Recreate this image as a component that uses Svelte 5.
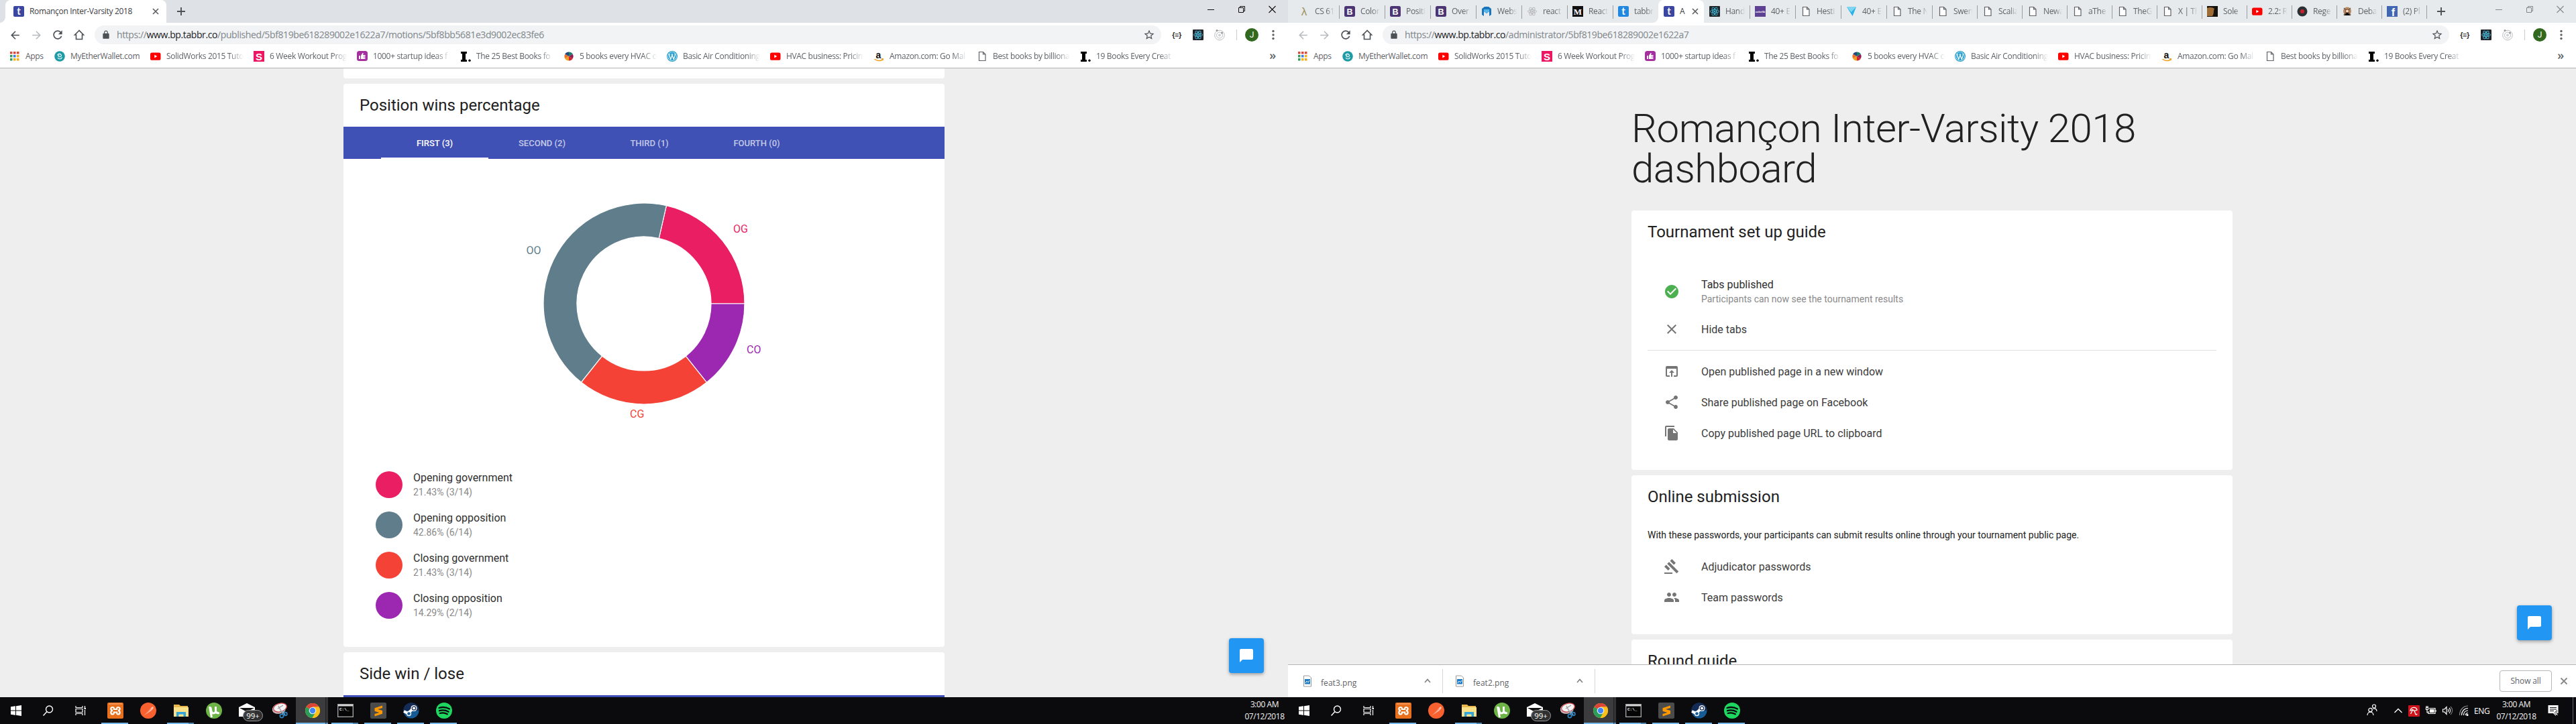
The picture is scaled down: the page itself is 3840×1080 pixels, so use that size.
<script>
  const bookmarks = [
    ['youtube', 'SolidWorks 2015 Tuto'],
    ['skimm', '6 Week Workout Prog'],
    ['thumb', '1000+ startup ideas f'],
    ['inc', 'The 25 Best Books fo'],
    ['wheel', '5 books every HVAC o'],
    ['wordpress', 'Basic Air Conditioning'],
    ['youtube', 'HVAC business: Pricin'],
    ['amazon', 'Amazon.com: Go Mal'],
    ['doc', 'Best books by billiona'],
    ['inc', '19 Books Every Creat']
  ];

  const tabs = [
    ['lambda', 'CS 61'], ['bootstrap', 'Color'], ['bootstrap', 'Positi'], ['bootstrap', 'Over'],
    ['webs', 'Webs'], ['atomgrey', 'react'], ['medium', 'React'], ['tlight', 'tabbr'],
    ['tdark', 'A'], ['atom', 'Hand'], ['colorlib', '40+ E'], ['doc', 'Hesti'], ['arrow', '40+ E'],
    ['doc', 'The N'], ['doc', 'Swen'], ['doc', 'Scalia'], ['doc', 'Newa'], ['doc', 'aThe'],
    ['doc', 'TheG'], ['doc', 'X | Th'], ['sole', 'Sole'], ['youtube', '2.2: R'], ['rege', 'Rege'],
    ['deba', 'Deba'], ['facebook', '(2) Pl']
  ];

  const apps = [
    ['xampp', 'open'], ['postman', ''], ['folder', 'multi'], ['utorrent', ''], ['mail', ''], ['snip', ''],
    ['chrome', 'active'], ['cmd', 'multi'], ['sublime', 'open'], ['steam', 'open'], ['spotify', 'open']
  ];

  const positions = [
    { name: 'Opening government', short: 'OG', wins: 3, color: '#e91e63', lx: 581, ly: 110 },
    { name: 'Opening opposition', short: 'OO', wins: 6, color: '#607d8b', lx: 272.5, ly: 142 },
    { name: 'Closing government', short: 'CG', wins: 3, color: '#f44336', lx: 427, ly: 386 },
    { name: 'Closing opposition', short: 'CO', wins: 2, color: '#9c27b0', lx: 601, ly: 290 }
  ];
  const total = 14;
  const cx = 448, cy = 216, outer = 150, inner = 100;

  // Slices run counter-clockwise, starting at three o'clock.
  function arc(from, to) {
    const p = (r, a) => `${(cx + r * Math.cos(a)).toFixed(2)} ${(cy - r * Math.sin(a)).toFixed(2)}`;
    const big = to - from > Math.PI ? 1 : 0;
    return `M${p(outer, from)}A${outer} ${outer} 0 ${big} 0 ${p(outer, to)}L${p(inner, to)}A${inner} ${inner} 0 ${big} 1 ${p(inner, from)}Z`;
  }
  let angle = 0;
  const slices = positions.map((p) => {
    const from = angle;
    angle += (p.wins / total) * Math.PI * 2;
    return { ...p, d: arc(from, angle), share: ((p.wins / total) * 100).toFixed(2) };
  });

  const material = {
    check: 'M12 2C6.48 2 2 6.48 2 12s4.48 10 10 10 10-4.48 10-10S17.52 2 12 2zm-2 15l-5-5 1.41-1.41L10 14.17l7.59-7.59L19 8l-9 9z',
    close: 'M19 6.41L17.59 5 12 10.59 6.41 5 5 6.41 10.59 12 5 17.59 6.41 19 12 13.41 17.59 19 19 17.59 13.41 12z',
    open: 'M19 4H5c-1.11 0-2 .9-2 2v12c0 1.1.89 2 2 2h4v-2H5V8h14v10h-4v2h4c1.1 0 2-.9 2-2V6c0-1.1-.89-2-2-2zm-7 6l-4 4h3v6h2v-6h3l-4-4z',
    share: 'M18 16.08c-.76 0-1.44.3-1.96.77L8.91 12.7c.05-.23.09-.46.09-.7s-.04-.47-.09-.7l7.05-4.11c.54.5 1.25.81 2.04.81 1.66 0 3-1.34 3-3s-1.34-3-3-3-3 1.34-3 3c0 .24.04.47.09.7L8.04 9.81C7.5 9.31 6.79 9 6 9c-1.66 0-3 1.34-3 3s1.34 3 3 3c.79 0 1.5-.31 2.04-.81l7.12 4.16c-.05.21-.08.43-.08.65 0 1.61 1.31 2.92 2.92 2.92s2.92-1.31 2.92-2.92-1.31-2.92-2.92-2.92z',
    copy: 'M16 1H4c-1.1 0-2 .9-2 2v14h2V3h12V1zm-1 4l6 6v10c0 1.1-.9 2-2 2H7.99C6.89 23 6 22.1 6 21l.01-14c0-1.1.89-2 1.99-2h7zm-1 7h5.5L14 6.5V12z',
    gavel: 'M1 21h12v2H1zM5.245 8.07l2.83-2.827 14.14 14.142-2.828 2.828zM12.317 1l5.657 5.656-2.83 2.83-5.654-5.66zM3.825 9.485l5.657 5.657-2.828 2.828-5.657-5.657z',
    people: 'M16 11c1.66 0 2.99-1.34 2.99-3S17.66 5 16 5s-3 1.34-3 3 1.34 3 3 3zm-8 0c1.66 0 2.99-1.34 2.99-3S9.66 5 8 5 5 6.34 5 8s1.34 3 3 3zm0 2c-2.33 0-7 1.17-7 3.5V19h14v-2.5c0-2.33-4.67-3.5-7-3.5zm8 0c-.29 0-.62.02-.97.05 1.16.84 1.97 1.97 1.97 3.45V19h6v-2.5c0-2.33-4.67-3.5-7-3.5z',
    chat: 'M20 2H4c-1.1 0-2 .9-2 2v18l4-4h14c1.1 0 2-.9 2-2V4c0-1.1-.9-2-2-2z',
    back: 'M20 11H7.83l5.59-5.59L12 4l-8 8 8 8 1.41-1.41L7.83 13H20v-2z',
    forward: 'M12 4l-1.41 1.41L16.17 11H4v2h12.17l-5.58 5.59L12 20l8-8z',
    reload: 'M17.65 6.35C16.2 4.9 14.21 4 12 4c-4.42 0-7.99 3.58-7.99 8s3.57 8 7.99 8c3.73 0 6.84-2.55 7.73-6h-2.08c-.82 2.33-3.04 4-5.65 4-3.31 0-6-2.69-6-6s2.69-6 6-6c1.66 0 3.14.69 4.22 1.78L13 11h7V4l-2.35 2.35z',
    lock: 'M18 8h-1V6c0-2.76-2.24-5-5-5S7 3.24 7 6v2H6c-1.1 0-2 .9-2 2v10c0 1.1.9 2 2 2h12c1.1 0 2-.9 2-2V10c0-1.1-.9-2-2-2zm-2.9 0H8.9V6c0-1.71 1.39-3.1 3.1-3.1s3.1 1.39 3.1 3.1v2z',
    star: 'M22 9.24l-7.19-.62L12 2 9.19 8.63 2 9.24l5.46 4.73L5.82 21 12 17.27 18.18 21l-1.63-7.03L22 9.24zM12 15.4l-3.76 2.27 1-4.28-3.32-2.88 4.38-.38L12 6.1l1.71 4.04 4.38.38-3.32 2.88 1 4.28L12 15.4z'
  };
</script>

{#snippet mat(name, size)}
  <svg width={size} height={size} viewBox="0 0 24 24" fill="currentColor"><path d={material[name]} /></svg>
{/snippet}

{#snippet atom(color, bg)}
  {#if bg}<rect width="16" height="16" rx="1" fill={bg} />{/if}
  <g fill="none" stroke={color} stroke-width="0.9">
    <ellipse cx="8" cy="8" rx="6.5" ry="2.5" />
    <ellipse cx="8" cy="8" rx="6.5" ry="2.5" transform="rotate(60 8 8)" />
    <ellipse cx="8" cy="8" rx="6.5" ry="2.5" transform="rotate(120 8 8)" />
  </g>
  <circle cx="8" cy="8" r="1.3" fill={color} />
{/snippet}

{#snippet fav(name)}
  <svg class="fav" width="16" height="16" viewBox="0 0 16 16">
    {#if name === 'tdark' || name === 'tlight'}
      <rect width="16" height="16" rx="2" fill={name === 'tdark' ? '#3a46a0' : '#2088e0'} />
      <text x="8" y="13" text-anchor="middle" class="letter t">t</text>
    {:else if name === 'bootstrap'}
      <rect width="16" height="16" rx="2.5" fill="#4b3573" />
      <text x="8" y="12.5" text-anchor="middle" class="letter b">B</text>
    {:else if name === 'medium'}
      <rect width="16" height="16" fill="#111" />
      <text x="8" y="12.5" text-anchor="middle" class="letter m">M</text>
    {:else if name === 'facebook'}
      <rect width="16" height="16" fill="#4267b2" />
      <text x="9.5" y="15" text-anchor="middle" class="letter f">f</text>
    {:else if name === 'lambda'}
      <text x="8" y="14" text-anchor="middle" class="letter lam">λ</text>
    {:else if name === 'skimm'}
      <rect width="16" height="16" fill="#ec1763" />
      <text x="8" y="13.5" text-anchor="middle" class="letter s">S</text>
    {:else if name === 'inc'}
      <path d="M1 1h9v3H8v9h2v3H1v-3h2V4H1z" fill="#000" />
      <circle cx="14" cy="14.3" r="1.7" fill="#000" />
    {:else if name === 'youtube'}
      <rect y="2.4" width="15.5" height="11.4" rx="2.6" fill="#f00" />
      <path d="M6.3 5.7v4.8L10.3 8.1z" fill="#fff" />
    {:else if name === 'thumb'}
      <rect y="0" width="16" height="15" rx="3.5" fill="#a62fa0" />
      <path d="M3 7h2v5H3zM6 7l2.500-4c1 0 1.300.7 1 1.500L9 6h3.500v6H6z" fill="#fff" />
      <path d="M9.500 8h3.500M9.500 10h3.500" stroke="#a62fa0" stroke-width=".6" />
    {:else if name === 'wheel'}
      <circle cx="8" cy="8" r="6.6" fill="#eee" />
      <path d="M8 8V1.400A6.600 6.600 0 0 1 13.700 4.700z" fill="#1c7f6e" />
      <path d="M8 8l5.700-3.300a6.600 6.600 0 0 1 0 6.600z" fill="#8c1d5a" />
      <path d="M8 8l5.700 3.300A6.600 6.600 0 0 1 8 14.600z" fill="#d5232f" />
      <path d="M8 8v6.600a6.600 6.600 0 0 1-5.700-3.300z" fill="#f0a21c" />
      <path d="M8 8l-5.700 3.300a6.600 6.600 0 0 1 0-6.600z" fill="#ea7524" />
      <path d="M8 8L2.300 4.700A6.600 6.600 0 0 1 8 1.400z" fill="#23477f" />
    {:else if name === 'wordpress'}
      <circle cx="8" cy="8" r="7.400" fill="#fff" stroke="#27a0cf" stroke-width="1.200" />
      <circle cx="8" cy="8" r="6.200" fill="#27a0cf" />
      <path d="M3 5l2.800 7.500L8 6l2.300 6.500L12.800 5M2.500 5H5M6.600 5h2.600M11 4.500h1.500" stroke="#fff" stroke-width="1.200" fill="none" />
    {:else if name === 'amazon'}
      <text x="7.500" y="10.500" text-anchor="middle" class="letter amz">a</text>
      <path d="M1.500 12c4 3.300 9 3.300 12 .8M12 11.800l2.300.2-.6 2.200" stroke="#f79a1c" stroke-width="1.500" fill="none" />
    {:else if name === 'doc'}
      <path d="M3.500 1.500h6l3.500 3.500v9.500H3.500zM9.500 1.500V5H13" fill="#fff" stroke="#5f6368" stroke-width="1.200" />
    {:else if name === 'mew'}
      <circle cx="8" cy="8" r="7.800" fill="#1d9aa5" />
      <path d="M4.500 6.500c1-3 5-3 6 0 .4 2-2 2.500-3.500 2-1.500-.4-1-2.500.5-2.300M11.500 9.500c-1 3-5 3.300-6.500.5" stroke="#d9f3f3" stroke-width="1.300" fill="none" />
    {:else if name === 'webs'}
      <path d="M1 4l4-3h6l4 3v9l-3 2V8L8 11 4 8v7l-3-2z" fill="#1b75bb" />
      <path d="M4 5h8v3l-4 3-4-3z" fill="#56b5e8" />
    {:else if name === 'atomgrey'}
      {@render atom('#b4b6ba', '')}
    {:else if name === 'atom'}
      {@render atom('#3fb7cf', '#20232a')}
    {:else if name === 'colorlib'}
      <rect width="16" height="16" fill="#5d4293" />
      <text x="8" y="10" text-anchor="middle" class="letter cl">colorlib</text>
    {:else if name === 'arrow'}
      <path d="M1 1.500h14L9.500 15z" fill="#2ab4e6" />
      <path d="M1 1.500h14L7.500 9z" fill="#7fd6f2" />
    {:else if name === 'sole'}
      <rect width="16" height="16" fill="#17110d" />
      <path d="M0 3c4-2 9-1 11 1-2 3 0 7-3 11H0z" fill="#a06c36" />
    {:else if name === 'rege'}
      <circle cx="8" cy="8" r="7.500" fill="#2c3136" />
      <circle cx="8" cy="8" r="3" fill="#c8202c" />
    {:else if name === 'deba'}
      <circle cx="8" cy="7.500" r="6" fill="#b58a63" />
      <path d="M3 14L8 8l5 6M3 3l10 10M13 3L3 13" stroke="#6a5a4a" stroke-width="1.300" />
      <circle cx="8" cy="7.500" r="2.500" fill="#f0e2c8" stroke="#8b3d2e" />
    {/if}
  </svg>
{/snippet}

{#snippet app(name)}
  <svg class="appicon" width="28" height="28" viewBox="-2 -2 28 28">
    {#if name === 'xampp'}
      <rect width="24" height="24" rx="2" fill="#e8701d" />
      <path d="M2 2h20" stroke="#f6b58a" stroke-width="1" />
      <path d="M8 7c-3.500 0-3.500 4.500 0 5-3.500.5-3.500 5.500 0 5.500 2.200 0 1.800-2 1.800-3h4.400c0 1-.4 3 1.800 3 3.500 0 3.500-5 0-5.500 3.500-.5 3.500-5 0-5-2.200 0-1.800 2-1.800 3H9.800c0-1 .4-3-1.800-3z" fill="none" stroke="#fff" stroke-width="2.200" />
    {:else if name === 'postman'}
      <circle cx="12" cy="12" r="12" fill="#f9602f" />
      <path d="M5 19.500L13.500 11l3.500-4 2.500-1 .3 2.500-3.800 4z" fill="#fbc5b0" />
      <path d="M5 19.500L16.500 9" stroke="#f9602f" stroke-width=".8" />
    {:else if name === 'folder'}
      <path d="M1 3h8l2 2h11v16H1z" fill="#e8b84c" />
      <path d="M1 7h22v14H1z" fill="#fbe08a" />
      <path d="M5 21v-7h14v7h-3.500v-3.500h-7V21z" fill="#2fa5dc" />
    {:else if name === 'utorrent'}
      <circle cx="12" cy="12" r="12" fill="#6db345" />
      <path d="M5.500 6l3 16M6.800 7l1.300 6.500c1 3.500 6 3 6.500-.5L14.500 6M14.800 13c.5 2.500 2.500 3 5 2.500" fill="none" stroke="#fff" stroke-width="3" />
    {:else if name === 'mail'}
      <path d="M0 7l12-6 12 6v14H0z" fill="#fff" />
      <path d="M1 8h22l-11 6z" fill="#111" />
    {:else if name === 'snip'}
      <ellipse cx="11" cy="9" rx="10.500" ry="7.500" transform="rotate(-18 11 9)" fill="#c9b6bb" />
      <ellipse cx="12.500" cy="7.500" rx="10" ry="6.200" transform="rotate(-15 12.500 7.500)" fill="#f4f4f5" stroke="#cf4a4f" stroke-width="1.300" />
      <path d="M9 9l8-5M10 5l5 10" stroke="#999" stroke-width="1.200" />
      <path d="M13 11l7 7M20 11l-5 7" stroke="#9bb6c6" stroke-width="1.500" />
      <circle cx="15" cy="20" r="2.600" fill="none" stroke="#2d82bd" stroke-width="1.700" />
      <circle cx="20.500" cy="17" r="2.400" fill="none" stroke="#2d82bd" stroke-width="1.700" />
    {:else if name === 'chrome'}
      <circle cx="12" cy="12" r="11" fill="#fbc116" />
      <path d="M12 12L2.500 6.500A11 11 0 0 1 21.500 6.500H12z" fill="#dc4437" />
      <path d="M12 12L2.500 6.500A11 11 0 0 0 11.500 23L16.500 14.500z" fill="#2a9d58" />
      <path d="M12 6.500h9.500A11 11 0 0 1 11.500 23l5-8.500z" fill="#fbc116" />
      <circle cx="12" cy="12" r="5.300" fill="#f3f3f3" />
      <circle cx="12" cy="12" r="4.200" fill="#4285f4" />
    {:else if name === 'cmd'}
      <rect x=".7" y="2.700" width="22.600" height="18.600" fill="#050505" stroke="#a8a8a8" stroke-width="1.300" />
      <rect x="1" y="3" width="22" height="2.500" fill="#d5d5d5" />
      <text x="3" y="11.500" class="letter cmdt">C:\_</text>
    {:else if name === 'sublime'}
      <rect width="24" height="24" rx="2" fill="#4b4b4b" />
      <path d="M18 4.500L6.500 8.200v4.600l7 2.200-7 2v3.500L18 16.700v-4.600l-7-2.200 7-1.900z" fill="#ff9800" />
    {:else if name === 'steam'}
      <circle cx="12" cy="12" r="11.500" fill="#175b96" />
      <path d="M.5 12A11.500 11.500 0 0 1 23.500 12z" fill="#142b55" />
      <path d="M1 13l6 3 9-8" stroke="#fff" stroke-width="4" fill="none" />
      <circle cx="16" cy="8.500" r="4.600" fill="#fff" />
      <circle cx="16" cy="8.500" r="2.700" fill="#fff" stroke="#142b55" stroke-width="1.200" />
      <circle cx="8.500" cy="16.500" r="3" fill="#175b96" stroke="#fff" stroke-width="1.300" />
    {:else if name === 'spotify'}
      <circle cx="12" cy="12" r="12" fill="#1ed760" />
      <path d="M4.500 8c5.500-1.700 11-1 15.500 1.500M5 12.200c4.500-1.300 9.500-.8 13.500 1.500M5.800 16c4-1 7.500-.7 11 1.300" fill="none" stroke="#0b0b0d" stroke-width="2.300" stroke-linecap="round" />
    {/if}
  </svg>
{/snippet}

{#snippet controls()}
  <div class="controls">
    <svg width="46" height="28" viewBox="0 0 46 28"><path d="M18 14.500h10" stroke="currentColor" /></svg>
    <svg width="46" height="28" viewBox="0 0 46 28"><path d="M18.500 11.500h7v7h-7zM20.500 11.500v-2h7v7h-2" fill="none" stroke="currentColor" /></svg>
    <svg width="46" height="28" viewBox="0 0 46 28"><path d="M17.500 9l10 10M27.500 9l-10 10" stroke="currentColor" stroke-width="1.100" /></svg>
  </div>
{/snippet}

{#snippet plus()}
  <svg class="plus" width="28" height="28" viewBox="0 0 28 28"><path d="M14 8v12M8 14h12" stroke="#4d5156" stroke-width="1.900" /></svg>
{/snippet}

{#snippet tabclose()}
  <svg width="16" height="16" viewBox="0 0 16 16"><path d="M4 4l8 8M12 4l-8 8" stroke="#5a5e63" stroke-width="1.600" /></svg>
{/snippet}

{#snippet toolbar(path, canGoBack)}
  <div class="toolbar">
    <span class="nav" class:dim={!canGoBack}>{@render mat('back', 19)}</span>
    <span class="nav dim">{@render mat('forward', 19)}</span>
    <span class="nav">{@render mat('reload', 20)}</span>
    <span class="nav"><svg width="20" height="20" viewBox="0 0 20 20"><path d="M10 3.500L3.500 10H5.500v6.500h9V10h2z" fill="none" stroke="currentColor" stroke-width="1.600" /></svg></span>
    <div class="omnibox">
      {@render mat('lock', 14)}
      <span class="url"><i>https://</i>www.bp.tabbr.co<i>{path}</i></span>
      {@render mat('star', 18)}
    </div>
    <span class="ext braces">{'{≡}'}</span>
    <span class="ext"><svg width="16" height="16" viewBox="0 0 16 16">{@render atom('#4fc3e0', '#20232a')}</svg></span>
    <span class="ext"><svg width="18" height="18" viewBox="0 0 18 18"><g fill="none" stroke="#bcbec2"><circle cx="9" cy="9.500" r="7.300" /><circle cx="9" cy="9.500" r="4.500" /></g><circle cx="9" cy="9.500" r="2" fill="#cfd1d4" /><circle cx="5" cy="2.500" r="1.500" fill="#97999d" /><circle cx="12.500" cy="6" r="1.500" fill="#97999d" /></svg></span>
    <span class="divider"></span>
    <span class="avatar">J</span>
    <svg class="dots" width="20" height="20" viewBox="0 0 20 20" fill="#5f6368"><circle cx="10" cy="4.500" r="1.700" /><circle cx="10" cy="10" r="1.700" /><circle cx="10" cy="15.500" r="1.700" /></svg>
  </div>
  <div class="bookmarks">
    <svg class="grid" width="14" height="14" viewBox="0 0 14 14">
      {#each ['#dd4b3e', '#dd4b3e', '#dd4b3e', '#2f9e58', '#3c7de0', '#f2b01e', '#2f9e58', '#f2b01e', '#f2b01e'] as c, i}
        <rect x={(i % 3) * 5} y={Math.floor(i / 3) * 5} width="3.500" height="3.500" fill={c} />
      {/each}
    </svg>
    <span class="apps">Apps</span>
    <span class="mew">{@render fav('mew')}MyEtherWallet.com</span>
    {#each bookmarks as [icon, label]}
      <span class="mark">{@render fav(icon)}<span class="fade">{label}</span></span>
    {/each}
    <span class="more">»</span>
  </div>
{/snippet}

{#snippet clock()}
  <div class="clock"><span>3:00 AM</span><span>07/12/2018</span></div>
{/snippet}

{#snippet taskbar(primary)}
  <div class="taskbar">
    <span class="sys"><svg width="18" height="18" viewBox="0 0 18 18" fill="#fff"><path d="M1 3.300L8 2.300v6.200H1zM9 2.200L17 1v7.500H9zM1 9.500h7v6.200l-7-1zM9 9.500h8V17l-8-1.200z" /></svg></span>
    <span class="sys"><svg width="18" height="18" viewBox="0 0 18 18" fill="none" stroke="#fff" stroke-width="1.400"><circle cx="10.500" cy="7" r="5" /><path d="M7 10.600L1.500 16.500" /></svg></span>
    <span class="sys"><svg width="18" height="18" viewBox="0 0 18 18" fill="none" stroke="#fff" stroke-width="1.200"><path d="M2 2v2.500h10V2M2 16v-2.500h10V16M2 6.500h10v5H2zM15.500 2v3M15.500 8v8" /><path d="M14.500 6h2.500" stroke-width="2" /></svg></span>
    <div class="applist">
      {#each apps as [name, state]}
        <div class="app {state}">
          {@render app(name)}
          {#if name === 'mail'}<b class="badge">99+</b>{/if}
        </div>
      {/each}
    </div>
    {#if primary}
      <div class="tray">
        <svg width="20" height="24" viewBox="0 0 20 24" fill="none" stroke="#fff" stroke-width="1.200"><circle cx="7.500" cy="11" r="2.700" /><path d="M3 19c0-6.500 9-6.500 9 0" /><circle cx="13" cy="5.500" r="2.500" /><path d="M11.500 9.500c3-1.500 5.500 0 5.500 3.500" /></svg>
        <svg width="14" height="14" viewBox="0 0 14 14" fill="none" stroke="#fff" stroke-width="1.300"><path d="M1.500 10L7 4.500l5.500 5.500" /></svg>
        <svg width="17" height="17" viewBox="0 0 17 17"><rect width="17" height="17" rx="1" fill="#d0131b" /><path d="M3 8C4 2 12 2 13 7L9 8.500 6.500 6.500 3 8zM9 8.500l2 5c1 .8 2 .3 2-.7M6.500 7l-3 6" fill="none" stroke="#fff" stroke-width="1.300" /></svg>
        <svg width="17" height="16" viewBox="0 0 17 16" fill="none" stroke="#fff" stroke-width="1.200"><path d="M6 4.500h9v8H5V9" /><rect x="7.500" y="6.500" width="5.500" height="4" fill="#fff" /><path d="M16 7v3M1 3.500h4M2 1v2M4 1v2M1.500 3.500v3h3v-3M3 6.500V11h2" /></svg>
        <svg width="17" height="16" viewBox="0 0 17 16" fill="none" stroke="#fff" stroke-width="1.200"><path d="M1.500 6h2.500l3-3.500v11L4 10H1.500zM9 6c1 1 1 3 0 4M11 4c2 2 2 6 0 8" /><path d="M13 2c3.500 3.500 3.500 8.500 0 12" stroke="#777" /></svg>
        <svg width="16" height="18" viewBox="0 0 16 18" fill="none" stroke="#fff" stroke-width="1.200"><path d="M1.500 16C1.500 8 7 2 14 2" stroke="#888" /><path d="M4.500 16c0-6 4-10.500 9.500-10.500M7.500 16c0-4 2.500-7 6.500-7M10.500 16c0-2 1-3.500 3.500-3.500" /><circle cx="13" cy="15.500" r="1" fill="#fff" /></svg>
        <span class="lang">ENG</span>
      </div>
      {@render clock()}
      <svg class="notes" width="20" height="20" viewBox="0 0 20 20"><path d="M2.500 2h15v12H14v4l-4-4H2.500z" fill="#fff" /><path d="M5 5.500h10M5 8h10M5 10.500h6" stroke="#0b0b0d" stroke-width="1.200" /><path d="M16 10a3.500 3.500 0 1 0 2 6.500 4 4 0 0 1-2-6.500z" fill="#fff" stroke="#0b0b0d" stroke-width=".8" /></svg>
      <span class="peek"></span>
    {:else}
      {@render clock()}
    {/if}
  </div>
{/snippet}

{#snippet row(icon, label)}
  <div class="row">{@render mat(icon, 24)}<span>{label}</span></div>
{/snippet}

<div class="desktop">
  <section class="screen">
    <div class="strip">
      <div class="tab wide active">
        {@render fav('tdark')}<span class="label">Romançon Inter-Varsity 2018</span>{@render tabclose()}
      </div>
      {@render plus()}
      {@render controls()}
    </div>
    {@render toolbar('/published/5bf819be618289002e1622a7/motions/5bf8bb5681e3d9002ec83fe6', true)}
    <main class="page">
      <div class="column">
        <div class="card stub"></div>
        <div class="card chartcard">
          <h2>Position wins percentage</h2>
          <div class="tabbar">
            <span class="on">FIRST (3)</span><span>SECOND (2)</span><span>THIRD (1)</span><span>FOURTH (0)</span>
          </div>
          <svg class="chart" width="896" height="456" viewBox="0 0 896 456">
            {#each slices as s}
              <path d={s.d} fill={s.color} stroke="#fff" stroke-width="1.200" />
              <text x={s.lx} y={s.ly} fill={s.color}>{s.short}</text>
            {/each}
          </svg>
          {#each slices as s}
            <div class="legend">
              <svg width="40" height="40"><circle cx="20" cy="20" r="20" fill={s.color} /></svg>
              <div class="two"><span>{s.name}</span><small>{s.share}% ({s.wins}/{total})</small></div>
            </div>
          {/each}
        </div>
        <div class="card">
          <h2>Side win / lose</h2>
          <div class="tabbar"></div>
        </div>
      </div>
      <button class="fab" aria-label="Chat">{@render mat('chat', 24)}</button>
    </main>
    {@render taskbar(false)}
  </section>

  <section class="screen second">
    <div class="strip">
      {#each tabs as [icon, label], i}
        <div class="tab" class:narrow={i > 13} class:active={i === 8} class:nosep={i === 7}>
          {@render fav(icon)}<span class="label fade">{label}</span>
          {#if i === 8}{@render tabclose()}{/if}
        </div>
      {/each}
      {@render plus()}
      {@render controls()}
    </div>
    {@render toolbar('/administrator/5bf819be618289002e1622a7', false)}
    <main class="page">
      <div class="column">
        <h1>Romançon Inter-Varsity 2018 dashboard</h1>
        <div class="card guide">
          <h2>Tournament set up guide</h2>
          <div class="row tall">
            <span class="ok">{@render mat('check', 24)}</span>
            <div class="two"><span>Tabs published</span><small>Participants can now see the tournament results</small></div>
          </div>
          {@render row('close', 'Hide tabs')}
          <hr />
          {@render row('open', 'Open published page in a new window')}
          {@render row('share', 'Share published page on Facebook')}
          {@render row('copy', 'Copy published page URL to clipboard')}
        </div>
        <div class="card guide">
          <h2>Online submission</h2>
          <p>With these passwords, your participants can submit results online through your tournament public page.</p>
          {@render row('gavel', 'Adjudicator passwords')}
          {@render row('people', 'Team passwords')}
        </div>
        <div class="card"><h2>Round guide</h2></div>
      </div>
      <button class="fab" aria-label="Chat">{@render mat('chat', 24)}</button>
    </main>
    <div class="downloads">
      {#each ['feat3.png', 'feat2.png'] as file}
        <div class="file">
          <svg width="14" height="18" viewBox="0 0 14 18"><path d="M1.500 1h8l3 3v13h-11z" fill="#fff" stroke="#9a9a9a" /><rect x="3" y="6" width="8" height="7.500" fill="#1979ca" /><path d="M4 12l2-3 2 2 2-3" stroke="#fff" fill="none" /></svg>
          <span>{file}</span>
          <svg width="12" height="12" viewBox="0 0 12 12"><path d="M2 8l4-4.500L10 8" fill="none" stroke="#7c8085" stroke-width="1.600" /></svg>
        </div>
      {/each}
      <span class="showall">Show all</span>
      <svg width="16" height="16" viewBox="0 0 16 16"><path d="M3.500 3.500l9 9M12.500 3.500l-9 9" stroke="#85888c" stroke-width="1.900" /></svg>
    </div>
    {@render taskbar(true)}
  </section>
</div>

<style>
  :global(body) { margin: 0; overflow: hidden; }
  .desktop { display: grid; grid-template-columns: 1920px 1920px; height: 1080px; overflow: hidden; font-family: 'Open Sans', 'Noto Sans', sans-serif; font-size: 12px; letter-spacing: -0.33px; color: #3c4043; }
  .screen { display: flex; flex-direction: column; height: 1080px; min-width: 0; background: #fff; }
  svg { display: block; flex: none; }

  .strip { display: flex; height: 34px; padding-left: 8px; background: #dee1e6; flex: none; }
  .second .strip { background: #e7eaed; }
  .tab { box-sizing: border-box; width: 68px; height: 34px; padding: 0 4px 0 8px; display: flex; align-items: center; gap: 8px; position: relative; color: #5f6368; }
  .tab.narrow { width: 67px; }
  .second .tab:not(.active):not(.nosep)::after { content: ''; position: absolute; right: -1px; top: 8px; width: 1px; height: 20px; background: #9a9da1; }
  .tab.active { background: #fff; border-radius: 8px 8px 0 0; color: #3c4043; }
  .tab.active::before, .tab.active::after { content: ''; position: absolute; bottom: 0; width: 8px; height: 8px; }
  .tab.active::before { left: -8px; background: radial-gradient(circle at 0 0, transparent 7.5px, #fff 8px); }
  .tab.active::after { right: -8px; background: radial-gradient(circle at 100% 0, transparent 7.5px, #fff 8px); }
  .tab.wide { width: 240px; padding: 0 8px 0 12px; }
  .label { flex: 1; min-width: 0; white-space: nowrap; line-height: 18px; }
  .second .tab.active .label { flex: none; width: 9px; }
  .second .tab.active > svg:last-child { margin-left: -2px; }
  .fade { -webkit-mask-image: linear-gradient(90deg, #000 55%, transparent 92%); mask-image: linear-gradient(90deg, #000 55%, transparent 92%); }
  .second .tab.active .fade { -webkit-mask-image: none; mask-image: none; }
  .plus { margin: 3px 0 0 8px; }
  .controls { display: flex; margin-left: auto; color: #111; }
  .second .controls { color: #85888b; }

  .letter { fill: #fff; font-family: 'Liberation Sans', sans-serif; font-weight: 700; letter-spacing: 0; }
  .t { font-size: 15px; font-family: Lato, sans-serif; }
  .b { font-size: 12.5px; }
  .m { font-size: 13px; font-family: 'Liberation Serif', serif; }
  .f { font-size: 16px; }
  .s { font-size: 15px; }
  .lam { fill: #9b9360; font-size: 17px; font-weight: 400; }
  .amz { fill: #111; font-size: 14px; }
  .cl { font-size: 4px; }
  .cmdt { font-size: 6px; font-family: 'Liberation Mono', monospace; }

  .toolbar { display: flex; align-items: center; height: 36px; padding-left: 6px; flex: none; color: #4d5156; }
  .nav { width: 32px; display: flex; justify-content: center; }
  .nav.dim { color: #b8babd; }
  .omnibox { box-sizing: border-box; width: 1590px; height: 28px; margin-left: 7px; padding: 0 9px 0 10px; border-radius: 14px; background: #f1f3f4; display: flex; align-items: center; gap: 9px; }
  .url { flex: 1; font-size: 14px; letter-spacing: -0.4px; color: #202124; white-space: nowrap; line-height: 20px; }
  .url i { font-style: normal; color: #80868b; }
  .ext { width: 32px; display: flex; justify-content: center; align-items: center; }
  .omnibox + .ext { margin-left: 7px; }
  .braces { font: 700 11px 'Liberation Sans', sans-serif; letter-spacing: -0.5px; color: #333; }
  .divider { width: 1px; height: 16px; margin: 0 0 0 9px; background: #c9ccd0; }
  .avatar { width: 20px; height: 20px; margin: 0 22px 0 12px; border-radius: 50%; background: #33691e; color: #fff; font: 12px/20px Roboto, sans-serif; text-align: center; letter-spacing: 0; }
  .dots { margin-left: -10px; }

  .bookmarks { box-sizing: border-box; height: 32px; padding: 0 18px 4px 15px; display: flex; align-items: center; border-bottom: 1px solid #b2b4b6; flex: none; color: #5f6368; white-space: nowrap; }
  .apps { width: 43px; margin-left: 9px; }
  .mew { display: flex; align-items: center; gap: 8px; width: 143px; }
  .mark { display: flex; align-items: center; gap: 8px; width: 154px; }
  .mark .fade { width: 124px; -webkit-mask-image: linear-gradient(90deg, #000 76%, transparent 93%); mask-image: linear-gradient(90deg, #000 76%, transparent 93%); }
  .more { margin-left: auto; font-size: 18px; line-height: 18px; padding-bottom: 3px; font-weight: 600; }

  .page { position: relative; flex: 1; min-height: 0; overflow: hidden; background: #eee; font-family: Roboto, sans-serif; letter-spacing: 0; color: #212121; }
  .column { width: 896px; margin: 0 auto; display: flex; flex-direction: column; gap: 8px; }
  .card { background: #fff; border-radius: 4px; flex: none; }
  .stub { height: 15px; border-radius: 0 0 4px 4px; }
  h1 { margin: 60px 0 24px; font-size: 60px; line-height: 60px; font-weight: 300; letter-spacing: -0.55px; }
  h2 { margin: 0; padding: 16px 24px; font-size: 24px; line-height: 32px; font-weight: 400; }
  .tabbar { display: flex; height: 48px; padding-left: 56px; background: #3f51b5; }
  .tabbar span { box-sizing: border-box; width: 160px; height: 48px; text-align: center; font-size: 13px; line-height: 49px; font-weight: 500; color: rgba(255, 255, 255, 0.7); }
  .tabbar .on { color: #fff; border-bottom: 2px solid #fff; }
  .chartcard { padding-bottom: 32px; }
  .chart text { font-size: 16px; font-family: Roboto, sans-serif; }
  .legend { display: flex; align-items: center; gap: 16px; height: 60px; padding-left: 48px; }
  .two { display: flex; flex-direction: column; font-size: 16px; line-height: 22px; }
  .two small { font-size: 14px; line-height: 20px; color: #8a8a8a; }
  .legend .two span { color: #2e2e2e; }
  .guide { padding: 0 24px 32px; }
  .guide h2 { padding: 16px 0; }
  .row { display: flex; align-items: center; gap: 32px; height: 46px; padding-left: 24px; font-size: 16px; color: #757575; }
  .row span { color: #3c3c3c; }
  .row.tall { height: 66px; padding-top: 24px; }
  .row .two span { color: #2e2e2e; }
  .row .ok { color: #4caf50; }
  hr { height: 1px; margin: 8px 0; border: 0; background: #e0e0e0; }
  p { margin: 15px 0 14px; font-size: 14px; line-height: 20px; letter-spacing: -0.017px; }
  .fab { position: absolute; right: 36px; bottom: 36px; width: 52px; height: 52px; padding: 0; border: 0; border-radius: 4px; background: #2196f3; color: #fff; display: grid; place-items: center; box-shadow: 0 2px 5px rgba(0, 0, 0, 0.35); }

  .downloads { box-sizing: border-box; height: 49px; border-top: 1px solid #b2b4b6; display: flex; align-items: center; padding-right: 10px; flex: none; color: #5f6368; }
  .file { box-sizing: border-box; width: 227px; height: 36px; padding: 0 16px 0 18px; border-right: 1px solid #d3d5d8; display: flex; align-items: center; }
  .file:first-child { width: 231px; padding-left: 22px; }
  .file span { flex: 1; margin: 5px 0 0 13px; font-size: 12px; letter-spacing: 0.05px; }
  .showall { box-sizing: border-box; width: 78px; height: 32px; margin: 0 10px 0 auto; border: 1px solid #b4b6b9; border-radius: 4px; text-align: center; line-height: 29px; letter-spacing: -0.15px; }

  .taskbar { display: flex; height: 40px; background: #0b0b0d; flex: none; align-items: center; color: #fff; }
  .sys { width: 48px; display: flex; justify-content: center; }
  .applist { display: flex; margin-left: 3px; }
  .app { position: relative; width: 49px; height: 40px; display: grid; place-items: center; }
  .app.active { background: linear-gradient(90deg, #3c3c3e 0 44px, #222 44px 45px, #333335 45px 48px, transparent 48px); }
  .open::after, .multi::after, .active::after { content: ''; position: absolute; left: 4px; bottom: 0; width: 40px; height: 2px; background: #76b9ed; }
  .multi::after { background: linear-gradient(90deg, #76b9ed 0 32px, #5285ab 32px); }
  .app.active::after { left: 0; width: 48px; background: linear-gradient(90deg, #76b9ed 0 44px, #456 44px 45px, #5b93bf 45px); }
  .badge { position: absolute; left: 19px; top: 19px; box-sizing: border-box; width: 30px; height: 17px; border: 1px solid #999; border-radius: 9px; background: rgba(50, 50, 50, 0.95); font-size: 11.5px; line-height: 15px; font-weight: 400; letter-spacing: 0; text-align: center; }
  .clock { width: 70px; margin-left: auto; display: flex; flex-direction: column; line-height: 18px; text-align: center; letter-spacing: -0.45px; color: #f2f2f2; }
  .tray { display: flex; align-items: center; margin-left: auto; gap: 8px; }
  .tray svg:first-child { margin-right: 14px; }
  .lang { margin: 0 4px 0 -1px; width: 24px; }
  .tray + .clock { margin-left: 0; }
  .notes { margin: 0 19px 0 10px; }
  .peek { width: 1px; height: 40px; margin-right: 4px; background: #66666a; }
</style>
